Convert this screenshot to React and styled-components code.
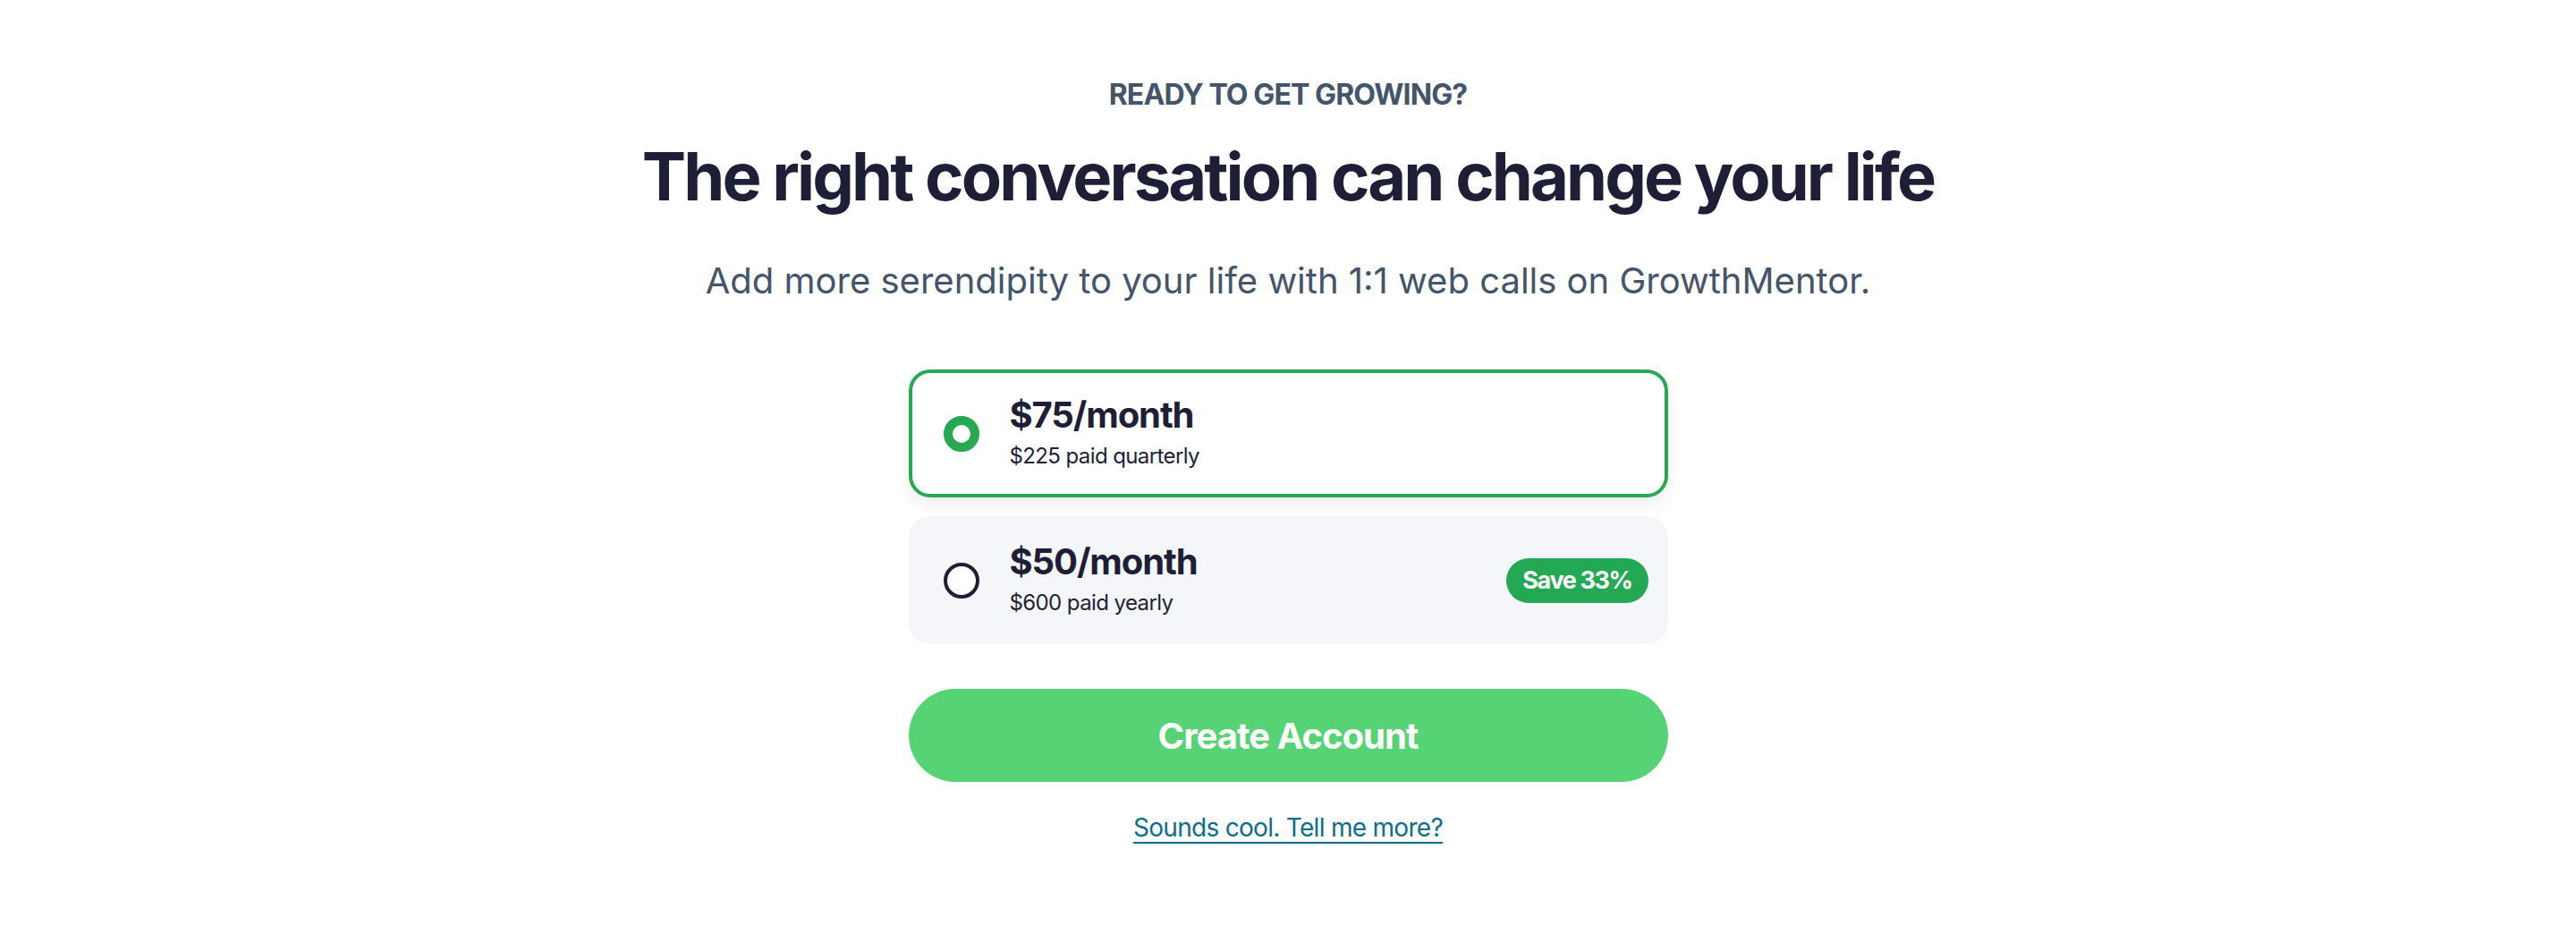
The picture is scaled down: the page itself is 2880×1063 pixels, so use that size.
import React, { useState } from 'react'
import styled, { createGlobalStyle } from 'styled-components'

const GlobalStyle = createGlobalStyle`
  html, body {
    margin: 0;
    padding: 0;
    background: #ffffff;
  }

  body {
    font-family: 'Inter', 'Liberation Sans', sans-serif;
    color: #1e1f36;
  }

  * {
    box-sizing: border-box;
  }
`

const Page = styled.main`
  display: flex;
  flex-direction: column;
  align-items: center;
  padding-top: 86px;
`

const Eyebrow = styled.p`
  margin: 0;
  font-size: 32px;
  line-height: 40px;
  font-weight: 700;
  letter-spacing: -0.9px;
  color: #44546a;
  text-transform: uppercase;
`

const Title = styled.h1`
  margin: 26px 0 0;
  font-size: 74px;
  line-height: 90px;
  font-weight: 700;
  letter-spacing: -2.9px;
  color: #1e1f36;
`

const Lead = styled.p`
  margin: 46px 0 0;
  font-size: 40px;
  line-height: 52px;
  font-weight: 400;
  color: #44546a;
`

const Plans = styled.div`
  width: 849px;
  margin-top: 73px;
  display: flex;
  flex-direction: column;
  gap: 21px;
`

const Plan = styled.label`
  display: flex;
  align-items: center;
  gap: 34px;
  height: 143px;
  padding: 0 18px 0 35px;
  border-radius: 24px;
  border: 4px solid ${p => (p.$active ? '#27a853' : 'transparent')};
  background: ${p => (p.$active ? '#ffffff' : '#f5f6fa')};
  box-shadow: ${p => (p.$active ? '0 8px 18px rgba(30, 31, 54, 0.07)' : 'none')};
  cursor: pointer;
`

const Radio = styled.span`
  flex: none;
  width: 40px;
  height: 40px;
  border-radius: 50%;
  background: #ffffff;
  border: ${p => (p.$checked ? '10px solid #27a853' : '4px solid #1e1f36')};
`

const PlanText = styled.div`
  flex: 1;
  display: flex;
  flex-direction: column;
  gap: 6px;
  padding-bottom: 4px;
`

const Price = styled.span`
  font-size: 40px;
  line-height: 48px;
  font-weight: 700;
  letter-spacing: -1.1px;
  color: #1e1f36;
`

const Billing = styled.span`
  font-size: 24px;
  line-height: 32px;
  letter-spacing: -0.6px;
  color: #1e1f36;
`

const Badge = styled.span`
  flex: none;
  display: inline-flex;
  align-items: center;
  height: 50px;
  padding: 0 18px;
  border-radius: 999px;
  background: #23a853;
  color: #ffffff;
  font-size: 27px;
  font-weight: 700;
  letter-spacing: -1.4px;
`

const CreateButton = styled.button`
  width: 849px;
  height: 104px;
  margin-top: 50px;
  border: none;
  border-radius: 999px;
  background: #56d374;
  color: #ffffff;
  font-family: inherit;
  font-size: 40px;
  font-weight: 700;
  letter-spacing: -1px;
  cursor: pointer;
`

const MoreLink = styled.a`
  margin-top: 33px;
  font-size: 28px;
  line-height: 36px;
  letter-spacing: -0.7px;
  color: #0b6e8a;
  text-decoration: underline;
  text-decoration-thickness: 2px;
  text-underline-offset: 6px;
  cursor: pointer;
`

const plans = [
  { id: 'quarterly', price: '$75/month', billing: '$225 paid quarterly' },
  { id: 'yearly', price: '$50/month', billing: '$600 paid yearly', badge: 'Save 33%' },
]

const App = () => {
  const [selected, setSelected] = useState('quarterly')

  return (
    <Page>
      <GlobalStyle />
      <Eyebrow>Ready to get growing?</Eyebrow>
      <Title>The right conversation can change your life</Title>
      <Lead>Add more serendipity to your life with 1:1 web calls on GrowthMentor.</Lead>
      <Plans>
        {plans.map(plan => (
          <Plan
            key={plan.id}
            $active={selected === plan.id}
            onClick={() => setSelected(plan.id)}
          >
            <Radio $checked={selected === plan.id} />
            <PlanText>
              <Price>{plan.price}</Price>
              <Billing>{plan.billing}</Billing>
            </PlanText>
            {plan.badge && <Badge>{plan.badge}</Badge>}
          </Plan>
        ))}
      </Plans>
      <CreateButton type='button'>Create Account</CreateButton>
      <MoreLink href='#more'>Sounds cool. Tell me more?</MoreLink>
    </Page>
  )
}

export default App
